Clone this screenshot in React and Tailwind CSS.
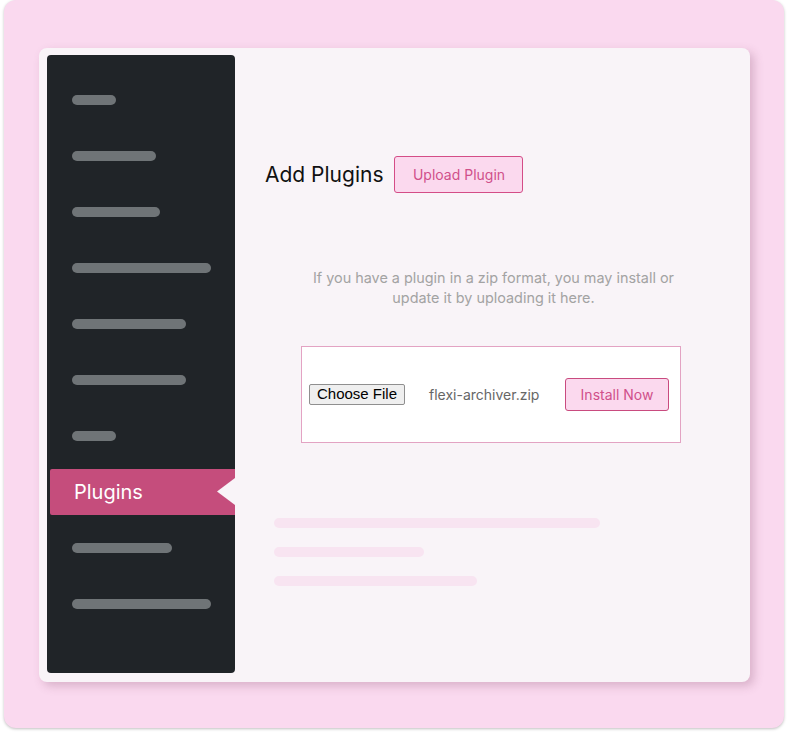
import React from "react";

const bars = [44, 84, 88, 139, 114, 114, 44];

function Bar({ w }) {
  return <div className="h-[10px] rounded-full bg-[#6f7477]" style={{ width: w }} />;
}

export default function App() {
  return (
    <div className="w-[788px] h-[736px] bg-white" style={{ fontFamily: "Inter, 'Noto Sans', sans-serif" }}>
      <div className="ml-[4px] w-[780px] h-[728px] rounded-[12px] bg-[#fad9ef] shadow-[0_1px_3px_rgba(0,0,0,0.25)] pt-[48px] pl-[35px]">
        <div className="w-[711px] h-[634px] rounded-[8px] bg-[#f9f4f8] shadow-[4px_4px_10px_rgba(120,60,90,0.25)] flex pl-[8px] pt-[7px] pb-[9px]">
          {/* Sidebar */}
          <div className="w-[188px] h-full bg-[#202428] rounded-[4px] flex flex-col pt-[40px]">
            <div className="flex flex-col gap-[46px] pl-[25px]">
              {bars.map((w, i) => (
                <Bar key={i} w={w} />
              ))}
            </div>
            <div className="relative mt-[28px] ml-[3px] h-[46px] bg-[#c54d7c] rounded-l-[2px] flex items-center pl-[24px]">
              <span className="text-white text-[20px] leading-none">Plugins</span>
              <svg className="absolute right-0 top-[9px]" width="18" height="27" viewBox="0 0 18 27">
                <polygon points="18,0 0,13.5 18,27" fill="#f9f4f8" />
              </svg>
            </div>
            <div className="flex flex-col gap-[46px] pl-[25px] mt-[28px]">
              <Bar w={100} />
              <Bar w={139} />
            </div>
          </div>
          {/* Main */}
          <div className="flex-1 flex flex-col pt-[101px]">
            <div className="flex items-center pl-[30px]">
              <h1 className="text-[21px] text-[#111] leading-none mr-[11px]">Add Plugins</h1>
              <button className="w-[129px] h-[37px] rounded-[3px] border border-[#d44d87] bg-[#fbd9ee] text-[#d0508a] text-[14px]">
                Upload Plugin
              </button>
            </div>
            <p className="mt-[75px] ml-[2px] text-center text-[14.4px] leading-[20px] text-[#a3a3a3]">
              If you have a plugin in a zip format, you may install or
              <br />
              update it by uploading it here.
            </p>
            <div className="mt-[38px] ml-[66px] w-[380px] h-[97px] bg-white border border-[#e3a3c3] flex items-center pl-[7px] pr-[11px]">
              <span
                className="h-[21px] px-[7px] flex items-center bg-[#efefef] border border-[#8f8f8f] rounded-[2px] text-[15px] text-black"
                style={{ fontFamily: "'Liberation Sans', Arial, sans-serif" }}
              >
                Choose File
              </span>
              <span className="ml-[24px] text-[14px] text-[#666]">flexi-archiver.zip</span>
              <button className="ml-auto w-[104px] h-[33px] rounded-[3px] border border-[#c94b7f] bg-[#fbd9ee] text-[#d0508a] text-[14px]">
                Install Now
              </button>
            </div>
            <div className="mt-[75px] pl-[39px] flex flex-col gap-[19px]">
              <div className="h-[10px] w-[326px] rounded-full bg-[#f8e4f1]" />
              <div className="h-[10px] w-[150px] rounded-full bg-[#f8e4f1]" />
              <div className="h-[10px] w-[203px] rounded-full bg-[#f8e4f1]" />
            </div>
          </div>
        </div>
      </div>
    </div>
  );
}
